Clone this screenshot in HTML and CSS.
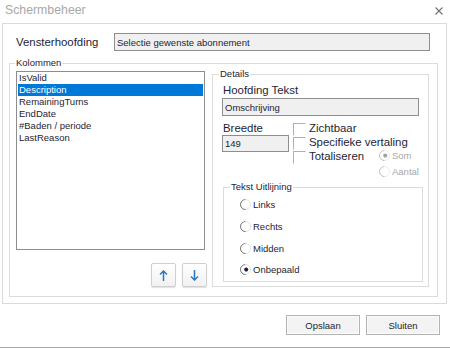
FILE: index.html
```html
<!DOCTYPE html>
<html lang="nl">
<head>
    <meta charset="UTF-8">
    <meta name="viewport" content="width=device-width, initial-scale=1.0">
    <title>Schermbeheer</title>
    <link rel="stylesheet" href="styles.css">
</head>
<body>

<div class="window">
    <div class="titlebar">
        <span class="title">Schermbeheer</span>
        <svg class="close" width="8" height="8" viewBox="0 0 8 8">
            <path d="M0.5 0.5 L7.5 7.5 M7.5 0.5 L0.5 7.5" stroke="#707070" stroke-width="1.1" fill="none"/>
        </svg>
    </div>

    <div class="panel">
        <div class="caption-row">
            <span class="big-label caption-label">Vensterhoofding</span>
            <div class="field caption-field">Selectie gewenste abonnement</div>
        </div>

        <fieldset class="group columns">
            <legend>Kolommen</legend>
            <div class="columns-body">
                <div class="list-side">
                    <ul class="listbox">
                        <li>IsValid</li>
                        <li class="selected">Description</li>
                        <li>RemainingTurns</li>
                        <li>EndDate</li>
                        <li>#Baden / periode</li>
                        <li>LastReason</li>
                    </ul>
                    <div class="move-buttons">
                        <button class="move-btn" title="Omhoog">
                            <svg width="9" height="11" viewBox="0 0 9 11"><path d="M4.5 1 V11 M1 4.5 L4.5 1 L8 4.5" stroke="#2f77bd" stroke-width="1.5" fill="none"/></svg>
                        </button>
                        <button class="move-btn" title="Omlaag">
                            <svg width="9" height="11" viewBox="0 0 9 11"><path d="M4.5 0 V10 M1 6.5 L4.5 10 L8 6.5" stroke="#2f77bd" stroke-width="1.5" fill="none"/></svg>
                        </button>
                    </div>
                </div>

                <fieldset class="group details">
                    <legend>Details</legend>
                    <div class="big-label heading-label">Hoofding Tekst</div>
                    <div class="field heading-field">Omschrijving</div>

                    <div class="size-row">
                        <div class="size-col">
                            <div class="big-label">Breedte</div>
                            <div class="field size-field">149</div>
                        </div>
                        <div class="checks">
                            <div class="check-row"><span class="checkbox"></span><span class="big-label">Zichtbaar</span></div>
                            <div class="check-row"><span class="checkbox"></span><span class="big-label">Specifieke vertaling</span></div>
                            <div class="check-row">
                                <span class="checkbox"></span><span class="big-label total-label">Totaliseren</span>
                                <div class="total-options">
                                    <div class="option disabled"><span class="radio checked"></span>Som</div>
                                    <div class="option disabled"><span class="radio"></span>Aantal</div>
                                </div>
                            </div>
                        </div>
                    </div>

                    <fieldset class="group align">
                        <legend>Tekst Uitlijning</legend>
                        <div class="option align-option"><span class="radio"></span>Links</div>
                        <div class="option align-option"><span class="radio"></span>Rechts</div>
                        <div class="option align-option"><span class="radio"></span>Midden</div>
                        <div class="option align-option"><span class="radio checked"></span>Onbepaald</div>
                    </fieldset>
                </fieldset>
            </div>
        </fieldset>
    </div>

    <div class="actions">
        <button class="action-btn">Opslaan</button>
        <button class="action-btn">Sluiten</button>
    </div>
    <div class="bottom-line"></div>
</div>

</body>
</html>
```

FILE: styles.css
```css
* {
    box-sizing: border-box;
}

body {
    margin: 0;
    background: white;
    font-family: 'Liberation Sans', Arial, sans-serif;
    font-size: 9.5px;
    color: #1e1e34;
}

.window {
    width: 450px;
    height: 349px;
    overflow: hidden;
}

.titlebar {
    height: 23px;
    display: flex;
    justify-content: space-between;
    align-items: flex-start;
    padding: 0 7px 0 5px;
}

.title {
    font-size: 12.3px;
    line-height: 20px;
    color: #a8a8a8;
}

.close {
    margin-top: 7px;
}

.panel {
    margin-left: 2px;
    width: 445px;
    height: 281px;
    border: 1px solid #dadada;
}

.big-label {
    font-size: 11.4px;
    line-height: 14px;
}

.caption-row {
    display: flex;
    align-items: center;
    padding: 9px 0 0 13px;
}

.caption-label {
    width: 98px;
}

.field {
    background: #f0f0f0;
    border: 1px solid #8e8e8e;
    padding: 0 2px;
    display: flex;
    align-items: center;
}

.caption-field {
    width: 316px;
    height: 18px;
}

/* group boxes */
.group {
    margin: 0;
    padding: 0;
    min-width: 0;
    border: 1px solid #dcdcdc;
}

.group legend {
    padding: 0 1px;
    line-height: 10px;
}

.columns {
    margin: 6px 0 0 6px;
    width: 429px;
    height: 240px;
}

.columns legend {
    margin-left: 5px;
    line-height: 12px;
}

.columns-body {
    display: flex;
    padding: 0 0 0 6px;
    gap: 5px;
}

.list-side {
    width: 191px;
    padding-top: 2px;
}

.listbox {
    list-style: none;
    margin: 0;
    padding: 0 1px;
    width: 189px;
    height: 179px;
    border: 1px solid #8d8d8d;
    background: white;
}

.listbox li {
    height: 12px;
    line-height: 12px;
    padding-left: 1px;
}

.listbox li.selected {
    background: #0078d7;
    color: white;
}

.move-buttons {
    display: flex;
    justify-content: flex-end;
    gap: 6px;
    margin-top: 13px;
}

.move-btn {
    width: 25px;
    height: 24px;
    padding: 0;
    border: 1px solid #cfcfcf;
    border-radius: 2px;
    background: linear-gradient(#ffffff, #f1f1f1);
    box-shadow: 0 1px 1px rgba(0, 0, 0, 0.12);
    display: flex;
    justify-content: center;
    align-items: center;
}

.details {
    margin-top: -1px;
    width: 217px;
    height: 219px;
    padding-left: 9px;
}

.details > legend {
    margin-left: -3px;
}

.heading-label {
    margin-top: 3px;
    padding-left: 1px;
}

.heading-field {
    margin-top: 1px;
    width: 197px;
    height: 18px;
}

.size-row {
    display: flex;
    gap: 4px;
    margin-top: 5px;
}

.size-col .big-label {
    padding-left: 1px;
}

.size-field {
    width: 67px;
    height: 17px;
}

.check-row {
    display: flex;
    align-items: flex-start;
    height: 14px;
}

.checkbox {
    width: 13px;
    height: 13px;
    margin: 2px 3px 0 0;
    border: 1px solid;
    border-color: #b0b0b0 #ffffff #ffffff #b0b0b0;
}

.total-label {
    width: 70px;
}

.total-options {
    margin-top: -2px;
}

.option {
    display: flex;
    align-items: center;
    height: 16px;
    gap: 2px;
}

.option.disabled {
    color: #a8a8a8;
}

.radio {
    position: relative;
    width: 11px;
    height: 11px;
    border-radius: 50%;
    border: 1px solid;
    border-color: #7c7c7c #e4e4e4 #e4e4e4 #7c7c7c;
    transform: rotate(-45deg);
    background: white;
}

.disabled .radio {
    border-color: #c4c4c4 #efefef #efefef #c4c4c4;
}

.radio.checked::after {
    content: '';
    position: absolute;
    left: 2.5px;
    top: 2.5px;
    width: 4px;
    height: 4px;
    border-radius: 50%;
    background: #1e1e34;
}

.disabled .radio.checked::after {
    background: #a0a0a0;
}

.align {
    margin: 18px 0 0 1px;
    width: 200px;
    height: 101px;
    padding: 1px 0 0 16px;
}

.align > legend {
    margin-left: -10px;
}

.align-option {
    height: 21.7px;
}

/* bottom buttons */
.actions {
    display: flex;
    justify-content: flex-end;
    gap: 6px;
    margin-top: 11px;
    padding-right: 10px;
}

.action-btn {
    width: 74px;
    height: 20px;
    padding: 0;
    font-family: inherit;
    font-size: 9.5px;
    color: #1e1e34;
    background: #f3f3f3;
    border: 1px solid #b3b3b3;
    box-shadow: inset 0 0 0 1px #fbfbfb;
}

.bottom-line {
    margin-top: 12px;
    border-top: 1px solid #a8a8a8;
}
```
